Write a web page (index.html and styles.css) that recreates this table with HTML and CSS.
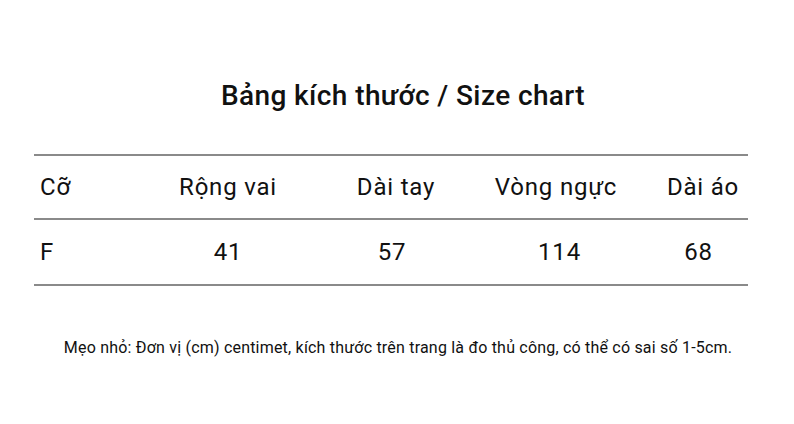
FILE: index.html
```html
<!DOCTYPE html>
<html lang="vi">
<head>
<meta charset="utf-8">
<link rel="stylesheet" href="styles.css">
</head>
<body>
<div class="page">
  <h1 class="title">Bảng kích thước / Size chart</h1>
  <div class="chart">
    <div class="row head">
      <div class="cell first">Cỡ</div>
      <div class="cell">Rộng vai</div>
      <div class="cell">Dài tay</div>
      <div class="cell">Vòng ngực</div>
      <div class="cell">Dài áo</div>
    </div>
    <div class="row body">
      <div class="cell first">F</div>
      <div class="cell">41</div>
      <div class="cell">57</div>
      <div class="cell">114</div>
      <div class="cell">68</div>
    </div>
  </div>
  <p class="note">Mẹo nhỏ: Đơn vị (cm) centimet, kích thước trên trang là đo thủ công, có thể có sai số 1-5cm.</p>
</div>
</body>
</html>
```
FILE: styles.css
```css
html, body {
  margin: 0;
  padding: 0;
  background: #ffffff;
}
body {
  font-family: Roboto, "Liberation Sans", sans-serif;
  color: #111111;
  width: 794px;
  height: 424px;
  overflow: hidden;
}
.page {
  padding-top: 78px;
}
.title {
  margin: 0;
  text-align: center;
  font-size: 28px;
  font-weight: 500;
  letter-spacing: 0.4px;
  line-height: 36px;
  padding-left: 12px;
}
.chart {
  margin: 40px 46px 0 34px;
  border-top: 2px solid #8a8a8a;
}
.row {
  display: grid;
  grid-template-columns: 84px 220px 116px 204px 90px;
  border-bottom: 2px solid #8a8a8a;
  font-size: 24px;
  letter-spacing: 0.8px;
}
.head {
  height: 62px;
  align-items: center;
}
.body {
  height: 64px;
  align-items: center;
}
.cell {
  text-align: center;
}
.cell.first {
  text-align: left;
  padding-left: 6px;
}
.body .cell:nth-child(3) {
  padding-right: 8px;
}
.body .cell:nth-child(4) {
  padding-left: 7px;
}
.body .cell:nth-child(5) {
  padding-right: 9px;
}
.note {
  margin: 52px 0 0 0;
  text-align: center;
  font-size: 16px;
  letter-spacing: 0.2px;
  padding-left: 2px;
}
```
